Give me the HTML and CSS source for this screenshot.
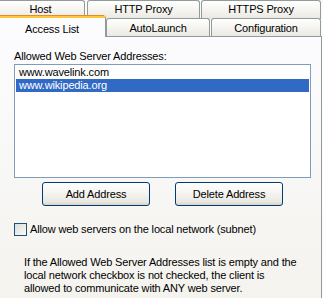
FILE: index.html
```html
<!DOCTYPE html>
<html>
<head>
<meta charset="utf-8">
<link rel="stylesheet" href="styles.css">
</head>
<body>
<div class="tabctl">
  <div class="row1">
    <div class="tab t-host">Host</div>
    <div class="tab t-http">HTTP Proxy</div>
    <div class="tab t-https">HTTPS Proxy</div>
  </div>
  <div class="row2">
    <div class="tab sel t-access">Access List</div>
    <div class="tab t-auto">AutoLaunch</div>
    <div class="tab t-config">Configuration</div>
  </div>
  <div class="panel">
    <div class="label">Allowed Web Server Addresses:</div>
    <div class="listbox">
      <div class="item">www.wavelink.com</div>
      <div class="item selected">www.wikipedia.org</div>
    </div>
    <div class="buttons">
      <div class="btn btn-add">Add Address</div>
      <div class="btn btn-del">Delete Address</div>
    </div>
    <div class="check-row">
      <span class="checkbox"></span>
      <span class="check-label">Allow web servers on the local network (subnet)</span>
    </div>
    <p class="note">If the Allowed Web Server Addresses list is empty and the<br>local network checkbox is not checked, the client is<br>allowed to communicate with ANY web server.</p>
  </div>
</div>
</body>
</html>
```
FILE: styles.css
```css
html, body {
  margin: 0;
  padding: 0;
}
body {
  width: 323px;
  height: 298px;
  overflow: hidden;
  background: #fbfbf8;
  font-family: "Liberation Sans", Arial, sans-serif;
  font-size: 11px;
  line-height: 13px;
  letter-spacing: -0.15px;
  color: #000;
}
.tabctl {
  width: 323px;
}
.row1 {
  display: flex;
  height: 15px;
  margin-left: -4px;
}
.tab {
  box-sizing: border-box;
  border: 1px solid #919b9c;
  border-bottom: none;
  border-radius: 3px 3px 0 0;
  background: linear-gradient(#ffffff, #f3f2ed 60%, #e9e8e2);
  text-align: center;
}
.row1 .tab {
  height: 19px;
  padding-top: 2px;
}
.t-host { width: 89px; margin-right: 2px; }
.t-http { width: 113px; margin-right: 1px; }
.t-https { width: 120px; }
.row2 {
  display: flex;
  height: 21px;
  position: relative;
  z-index: 1;
  margin-left: -2px;
}
.row2 .tab {
  height: 18px;
  margin-top: 3px;
  padding-top: 3px;
}
.row2 .tab.sel {
  height: 22px;
  margin-top: 0;
  padding-top: 5px;
  background: #fcfcfe;
  border-top: 3px solid #ffc83c;
  position: relative;
}
.row2 .tab.sel::before {
  content: "";
  position: absolute;
  left: 1px;
  right: 1px;
  top: -3px;
  height: 1px;
  background: #e68b2c;
}
.t-access { width: 108px; }
.t-auto { width: 104px; margin-right: 1px; }
.t-config { width: 110px; }
.panel {
  box-sizing: border-box;
  width: 323px;
  height: 270px;
  margin-left: -1px;
  border: 1px solid #919b9c;
  background: linear-gradient(#fcfcfe, #f4f3ee 260px);
  padding: 13px 0 0 1px;
}
.label {
  padding-left: 13px;
  height: 13px;
  margin-bottom: 1px;
}
.listbox {
  box-sizing: border-box;
  margin-left: 13px;
  width: 297px;
  height: 114px;
  border: 1px solid #7f9db9;
  background: #fff;
  padding: 1px;
}
.item {
  height: 13px;
  line-height: 13px;
  padding-left: 3px;
}
.item.selected {
  background: #316ac5;
  color: #fff;
}
.buttons {
  display: flex;
  gap: 25px;
  margin: 4px 0 0 41px;
}
.btn {
  box-sizing: border-box;
  width: 108px;
  height: 24px;
  border: 1px solid #003c74;
  border-radius: 3px;
  background: linear-gradient(#ffffff, #f5f4f0 45%, #eae8e1 85%, #d8d4ca);
  text-align: center;
  line-height: 22px;
}
.check-row {
  display: flex;
  align-items: center;
  margin: 17px 0 0 13px;
  height: 13px;
}
.checkbox {
  box-sizing: border-box;
  width: 13px;
  height: 13px;
  border: 1px solid #1c5180;
  background: linear-gradient(135deg, #dcdcd7, #fbfbf9);
  margin-right: 3px;
}
.note {
  margin: 20px 0 0 23px;
  width: 296px;
  white-space: nowrap;
}
```
